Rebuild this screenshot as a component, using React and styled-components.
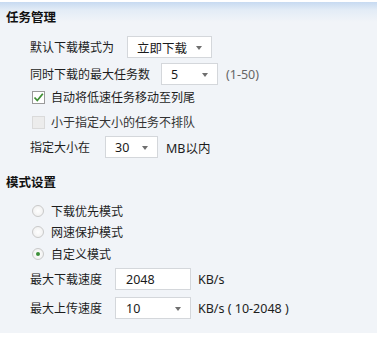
import React from 'react';
import styled, { createGlobalStyle } from 'styled-components';

const GlobalStyle = createGlobalStyle`
    body {
        margin: 0;
        background: #ffffff;
        font-family: "Noto Sans", "Noto Sans CJK SC", sans-serif;
    }
`

const Panel = styled.div`
    width: 377px;
    height: 331px;
    margin-top: 2px;
    box-sizing: border-box;
    padding: 8px 0 0 6px;
    background: linear-gradient(to bottom, #c7daf1 0px, #e3ecf6 8px, #f1f4f8 20px, #f1f4f8 100%);
    color: #1d1d1d;
    font-size: 12px;
`

const SectionTitle = styled.div`
    height: 16px;
    line-height: 16px;
    margin-top: ${props => props.$mt || 0}px;
    font-weight: bold;
    font-size: 12.5px;
    color: #111;
`

const Row = styled.div`
    display: flex;
    align-items: center;
    height: ${props => props.$h || 22}px;
    margin-top: ${props => props.$mt || 0}px;
    padding-left: ${props => props.$indent || 24}px;
`

const Label = styled.span`
    display: inline-block;
    width: ${props => props.$w}px;
    flex-shrink: 0;
    white-space: nowrap;
    color: ${props => props.$muted ? '#333' : '#1d1d1d'};
`

const Select = styled.div`
    position: relative;
    width: ${props => props.$w}px;
    height: 22px;
    box-sizing: border-box;
    border: 1px solid #d4d7db;
    background: #ffffff;
    padding-left: ${props => props.$pl || 9}px;
    display: flex;
    align-items: center;
    font-size: 12.5px;
    color: #1a1a1a;
`

const Arrow = styled.span`
    position: absolute;
    right: 9px;
    top: 9px;
    width: 0;
    height: 0;
    border-left: 3.5px solid transparent;
    border-right: 3.5px solid transparent;
    border-top: 4px solid #6f6f6f;
`

const Suffix = styled.span`
    margin-left: ${props => props.$ml || 8}px;
    color: ${props => props.$gray ? '#666' : '#1d1d1d'};
    white-space: nowrap;
    font-size: 12.5px;
`

const Box = styled.span`
    width: 13px;
    height: 13px;
    box-sizing: border-box;
    border: 1px solid ${props => props.$disabled ? '#dadada' : '#9a9a9a'};
    background: ${props => props.$disabled ? '#ececec' : '#ffffff'};
    margin-right: 6px;
    flex-shrink: 0;
    display: flex;
    align-items: center;
    justify-content: center;
`

const Radio = styled.span`
    width: 12px;
    height: 12px;
    box-sizing: border-box;
    border-radius: 50%;
    border: 1px solid #c9c9c9;
    background: radial-gradient(circle, #ffffff 0%, #ececec 100%);
    margin-right: 7px;
    flex-shrink: 0;
    display: flex;
    align-items: center;
    justify-content: center;
`

const Dot = styled.span`
    width: 4px;
    height: 4px;
    border-radius: 50%;
    background: #3d8f3a;
`

const Check = () => (
    <svg width="11" height="11" viewBox="0 0 11 11">
        <path d="M1.5 5.5 L4.3 8.5 L9.8 1.8" fill="none" stroke="#3f8f34" strokeWidth="1.8" />
    </svg>
)

const Dropdown = ({ w, value, pl }) => (
    <Select $w={w} $pl={pl}>
        {value}
        <Arrow />
    </Select>
)

const CheckRow = ({ checked, disabled, label, mt }) => (
    <Row $h={18} $mt={mt} $indent={26}>
        <Box $disabled={disabled}>{checked && <Check />}</Box>
        <Label $muted={disabled}>{label}</Label>
    </Row>
)

const RadioRow = ({ selected, label, mt }) => (
    <Row $h={18} $mt={mt} $indent={26}>
        <Radio>{selected && <Dot />}</Radio>
        <Label>{label}</Label>
    </Row>
)

export default function App() {
    return (
        <>
            <GlobalStyle />
            <Panel>
                <SectionTitle>任务管理</SectionTitle>
                <Row $mt={10}>
                    <Label $w={97}>默认下载模式为</Label>
                    <Dropdown w={85} value="立即下载" />
                </Row>
                <Row $mt={5}>
                    <Label $w={131}>同时下载的最大任务数</Label>
                    <Dropdown w={57} value="5" />
                    <Suffix $gray>(1-50)</Suffix>
                </Row>
                <CheckRow checked label="自动将低速任务移动至列尾" mt={3} />
                <CheckRow disabled label="小于指定大小的任务不排队" mt={7} />
                <Row $mt={5}>
                    <Label $w={75}>指定大小在</Label>
                    <Dropdown w={53} value="30" />
                    <Suffix>MB以内</Suffix>
                </Row>

                <SectionTitle $mt={17}>模式设置</SectionTitle>
                <RadioRow label="下载优先模式" mt={11} />
                <RadioRow label="网速保护模式" mt={3} />
                <RadioRow selected label="自定义模式" mt={4} />
                <Row $mt={5}>
                    <Label $w={85}>最大下载速度</Label>
                    <Select $w={76} $pl={10}>2048</Select>
                    <Suffix $ml={7}>KB/s</Suffix>
                </Row>
                <Row $mt={7}>
                    <Label $w={85}>最大上传速度</Label>
                    <Dropdown w={76} value="10" pl={10} />
                    <Suffix $ml={7}>KB/s ( 10-2048 )</Suffix>
                </Row>
            </Panel>
        </>
    );
}
